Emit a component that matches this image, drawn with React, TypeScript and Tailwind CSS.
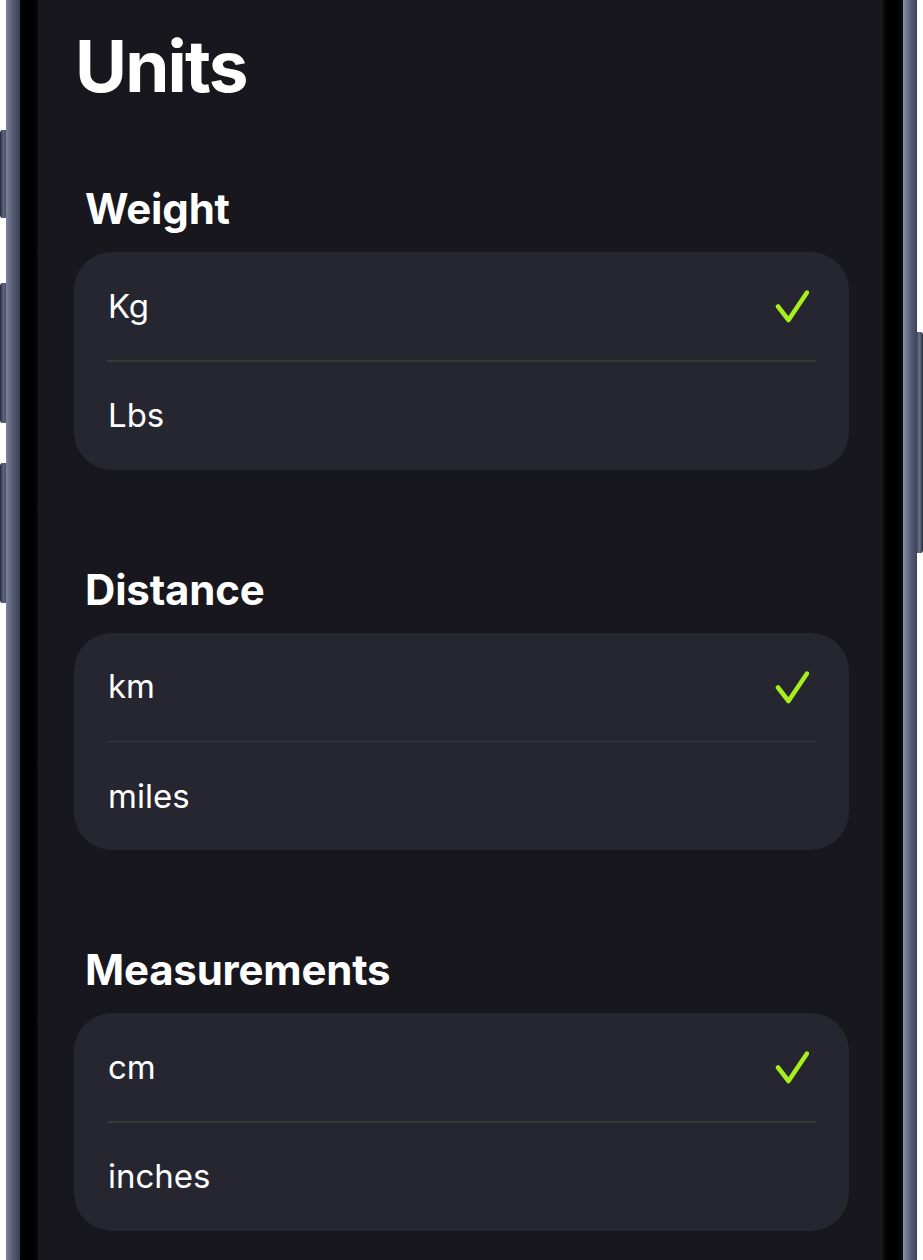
import React from 'react';

type Option = { label: string; selected?: boolean };
type Section = { title: string; options: Option[] };

const sections: Section[] = [
    { title: 'Weight', options: [{ label: 'Kg', selected: true }, { label: 'Lbs' }] },
    { title: 'Distance', options: [{ label: 'km', selected: true }, { label: 'miles' }] },
    { title: 'Measurements', options: [{ label: 'cm', selected: true }, { label: 'inches' }] },
];

const CheckIcon: React.FC = () => (
    <svg width="34" height="34" viewBox="0 0 34 34" fill="none" className="shrink-0">
        <path d="M3 17.5 13.5 31 32 3.5" stroke="#a6ef1c" strokeWidth="4.5" strokeLinecap="round" strokeLinejoin="round" />
    </svg>
);

// side button on the phone edge
const SideButton: React.FC<{ className: string; side: 'left' | 'right' }> = ({ className, side }) => (
    <div
        className={`${className} w-[6px] bg-gradient-to-r ${
            side === 'left'
                ? 'rounded-l-[3px] from-[#3a3f52] via-[#5d637b] to-[#4a5066] border-l border-[#2c3040]'
                : 'rounded-r-[3px] from-[#4a5066] via-[#6b7189] to-[#3a3f52] border-r border-[#2c3040]'
        }`}
    />
);

const UnitCard: React.FC<{ section: Section }> = ({ section }) => (
    <section>
        <h2 className="ml-[11px] text-[42px] font-bold leading-none tracking-[-0.2px] text-white">{section.title}</h2>
        <div className="mt-[22px] rounded-[38px] bg-[#262630] px-[33px]">
            {section.options.map((opt, i) => (
                <div key={opt.label}>
                    {i > 0 && <div className="h-[1.5px] bg-[#393a37]" />}
                    <div className="flex h-[108px] items-center justify-between pl-px pr-[7px]">
                        <span className="text-[33px] leading-none text-white">{opt.label}</span>
                        {opt.selected && <CheckIcon />}
                    </div>
                </div>
            ))}
        </div>
    </section>
);

const App: React.FC = () => {
    return (
        <div className="flex h-[1260px] w-[923px] overflow-hidden bg-white font-['Inter','Liberation_Sans',sans-serif]">
            {/* left edge buttons */}
            <div className="flex w-[6px] flex-col">
                <SideButton side="left" className="mt-[130px] h-[88px]" />
                <SideButton side="left" className="mt-[65px] h-[140px]" />
                <SideButton side="left" className="mt-[40px] h-[140px]" />
            </div>
            <div className="w-[14px] bg-gradient-to-r from-[#7d839c] via-[#555b72] to-[#3b4054]" />
            <div className="w-[18px] bg-gradient-to-r from-[#050506] via-black to-[#0d0d10]" />

            <main className="flex w-[845px] flex-col bg-[#17171d] pl-[36px] pr-[34px]">
                <h1 className="ml-px mt-[31px] text-[71px] font-bold leading-none tracking-[-1.8px] text-white">Units</h1>
                <div className="mt-[86px] flex flex-col gap-[99px]">
                    {sections.map((s) => (
                        <UnitCard key={s.title} section={s} />
                    ))}
                </div>
            </main>

            <div className="w-[20px] bg-gradient-to-r from-[#0d0d10] via-black to-[#111114]" />
            <div className="w-[14px] bg-gradient-to-r from-[#8a90aa] via-[#5b617a] to-[#3d4257]" />
            <div className="flex w-[6px] flex-col">
                <SideButton side="right" className="mt-[332px] h-[221px]" />
            </div>
        </div>
    );
};

export default App;
